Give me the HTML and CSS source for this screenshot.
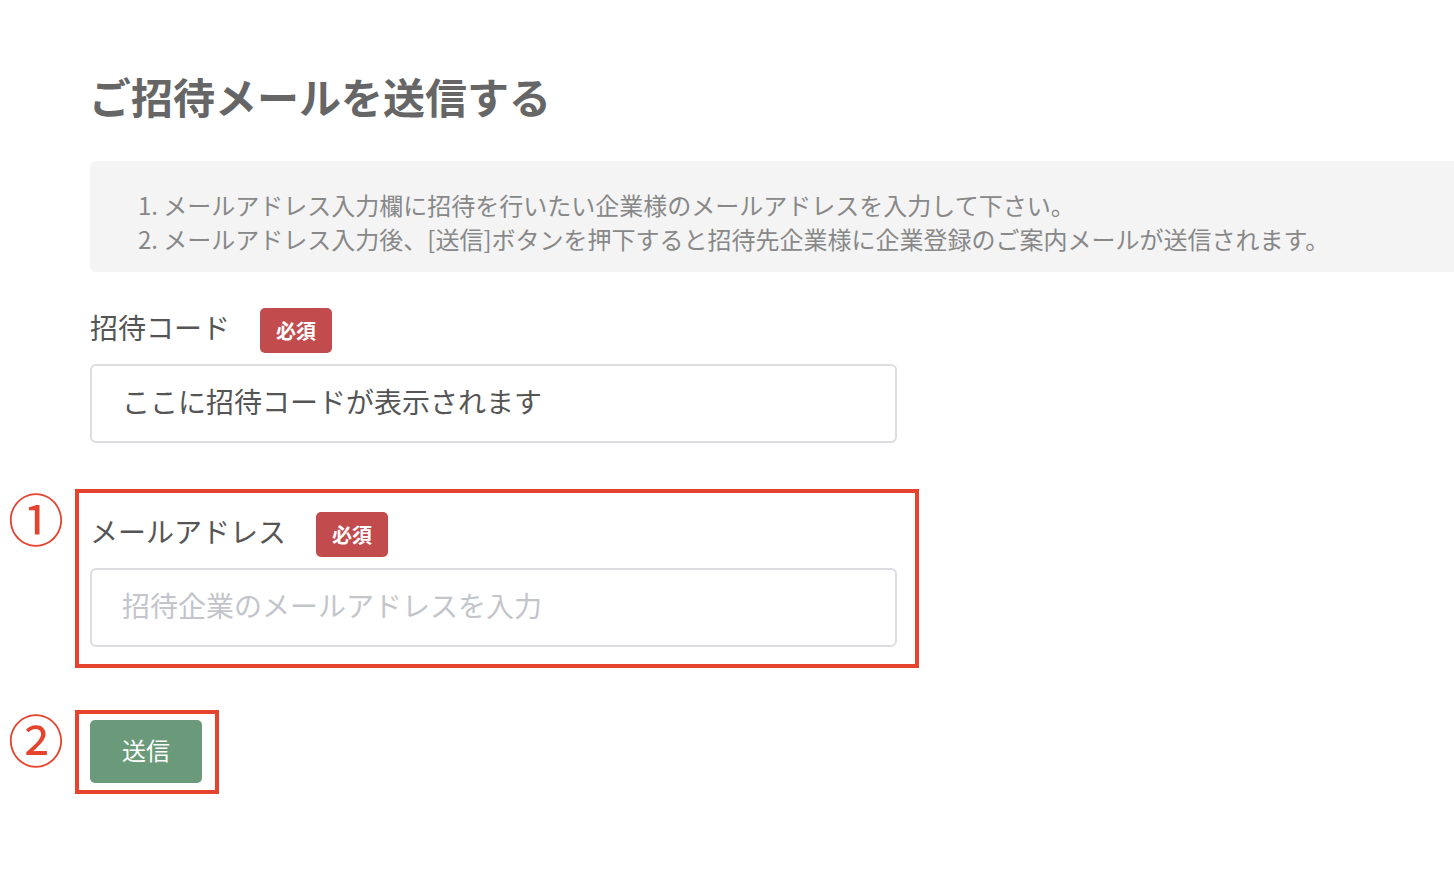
FILE: index.html
```html
<!DOCTYPE html>
<html lang="ja">
<head>
    <meta charset="UTF-8">
    <meta name="viewport" content="width=device-width, initial-scale=1.0">
    <title>ご招待メールを送信する</title>
    <link rel="stylesheet" href="styles.css">
</head>
<body>

    <div class="page">
        <h1 class="title">ご招待メールを送信する</h1>

        <div class="notice">
            <p>1. メールアドレス入力欄に招待を行いたい企業様のメールアドレスを入力して下さい。</p>
            <p>2. メールアドレス入力後、[送信]ボタンを押下すると招待先企業様に企業登録のご案内メールが送信されます。</p>
        </div>

        <form class="invite-form">
            <div class="field">
                <div class="field-head">
                    <label for="code">招待コード</label>
                    <span class="required">必須</span>
                </div>
                <input type="text" id="code" class="text-input" value="ここに招待コードが表示されます" readonly>
            </div>

            <div class="field field-mail">
                <span class="step step-one">①</span>
                <div class="frame frame-mail"></div>
                <div class="field-head">
                    <label for="mail">メールアドレス</label>
                    <span class="required">必須</span>
                </div>
                <input type="email" id="mail" class="text-input" placeholder="招待企業のメールアドレスを入力">
            </div>

            <div class="actions">
                <span class="step step-two">②</span>
                <div class="frame frame-send"></div>
                <button type="submit" class="send-btn">送信</button>
            </div>
        </form>
    </div>

</body>
</html>
```

FILE: styles.css
```css
body {
    margin: 0;
    background-color: #ffffff;
    font-family: "Noto Sans CJK JP", "Noto Sans", sans-serif;
}

.page {
    padding-left: 90px;
    padding-bottom: 80px;
}

.title {
    margin: 71px 0 40px -1px;
    font-size: 42px;
    line-height: 50px;
    font-weight: bold;
    color: #666666;
}

.notice {
    background-color: #f4f4f4;
    border-radius: 6px 0 0 6px;
    padding: 27px 0 16px 48px;
    margin-bottom: 36px;
}

.notice p {
    margin: 0;
    font-size: 24px;
    line-height: 34px;
    color: #888888;
    white-space: nowrap;
}

.field {
    position: relative;
    width: 807px;
}

.field-mail {
    margin-top: 69px;
}

.field-head {
    display: flex;
    align-items: center;
    height: 45px;
    margin-bottom: 11px;
}

.field-head label {
    font-size: 28px;
    color: #555555;
    margin-right: 30px;
    margin-top: -7px;
}

.required {
    display: inline-flex;
    align-items: center;
    justify-content: center;
    width: 72px;
    height: 45px;
    border-radius: 5px;
    background-color: #c24b4e;
    color: #ffffff;
    font-size: 20px;
    font-weight: bold;
}

.text-input {
    display: block;
    box-sizing: border-box;
    width: 807px;
    height: 79px;
    padding: 0 30px 5px;
    border: 2px solid #dcdde1;
    border-radius: 6px;
    font-family: inherit;
    font-size: 28px;
    color: #555555;
    background-color: #ffffff;
    outline: none;
}

.text-input::placeholder {
    color: #c3c5cb;
}

.actions {
    position: relative;
    margin-top: 73px;
}

.send-btn {
    width: 112px;
    height: 63px;
    padding: 0 0 5px;
    border: none;
    border-radius: 5px;
    background-color: #6b9a7a;
    color: #ffffff;
    font-family: inherit;
    font-size: 24px;
    cursor: pointer;
}

/* annotation frames and numbers */
.frame {
    position: absolute;
    border: 4px solid #e5432d;
    box-sizing: border-box;
    pointer-events: none;
}

.frame-mail {
    left: -15px;
    top: -23px;
    width: 844px;
    height: 179px;
}

.frame-send {
    left: -15px;
    top: -10px;
    width: 144px;
    height: 84px;
}

.step {
    position: absolute;
    left: -82px;
    font-size: 56px;
    line-height: 56px;
    color: #e5432d;
}

.step-one {
    top: -23px;
}

.step-two {
    top: -10px;
}
```
